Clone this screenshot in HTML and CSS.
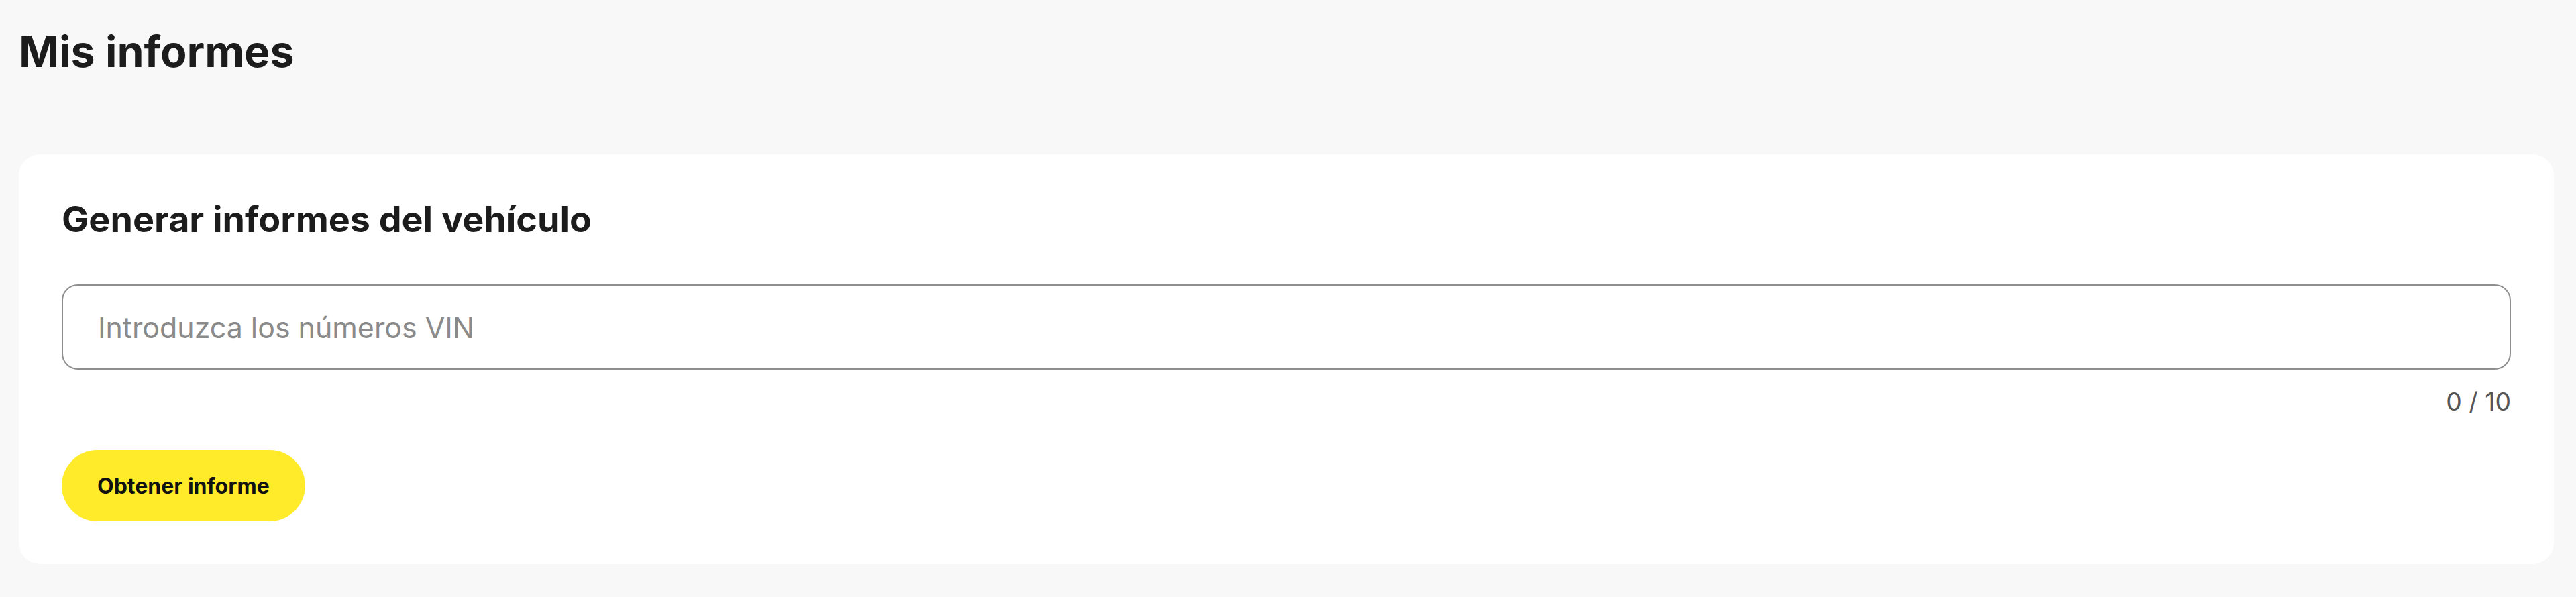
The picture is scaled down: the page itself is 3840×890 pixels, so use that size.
FILE: index.html
```html
<!DOCTYPE html>
<html lang="es">
<head>
<meta charset="utf-8">
<title>Mis informes</title>
<link rel="stylesheet" href="styles.css">
</head>
<body>
<main class="page">
  <h1 class="page-title">Mis informes</h1>
  <section class="card">
    <h2 class="card-title">Generar informes del vehículo</h2>
    <div class="field">
      <input class="vin-input" type="text" placeholder="Introduzca los números VIN">
    </div>
    <div class="counter">0 / 10</div>
    <div class="actions">
      <button class="btn-primary" type="button">Obtener informe</button>
    </div>
  </section>
</main>
</body>
</html>
```
FILE: styles.css
```css
* {
  box-sizing: border-box;
}

html, body {
  margin: 0;
  padding: 0;
  background: #f8f8f8;
}

body {
  font-family: Inter, "Noto Sans", "Liberation Sans", sans-serif;
  color: #1c1c1c;
  height: 890px;
  overflow: hidden;
}

.page {
  padding: 39px 33px 0 28px;
}

.page-title {
  margin: 0;
  font-size: 64.5px;
  line-height: 77px;
  font-weight: 700;
  color: #1c1c1c;
}

.card {
  margin-top: 114px;
  background: #ffffff;
  border-radius: 32px;
  padding: 65px 64px 64px 64px;
  display: flex;
  flex-direction: column;
}

.card-title {
  margin: 0;
  font-size: 53.8px;
  line-height: 64px;
  font-weight: 700;
  color: #1c1c1c;
}

.field {
  margin-top: 65px;
}

.vin-input {
  display: block;
  width: 100%;
  height: 127px;
  border: 2px solid #8e8e8e;
  border-radius: 24px;
  padding: 0 52px;
  font-family: inherit;
  font-size: 42.9px;
  color: #1c1c1c;
  background: #ffffff;
  outline: none;
}

.vin-input::placeholder {
  color: #8a8a8a;
  opacity: 1;
}

.counter {
  margin-top: 25px;
  text-align: right;
  font-size: 37.33px;
  line-height: 45px;
  color: #555555;
}

.actions {
  margin-top: 50px;
  display: flex;
}

.btn-primary {
  height: 106px;
  padding: 0 53px;
  border: none;
  border-radius: 999px;
  background: #ffeb29;
  color: #111111;
  font-family: inherit;
  font-size: 32px;
  font-weight: 700;
  cursor: pointer;
}
```
